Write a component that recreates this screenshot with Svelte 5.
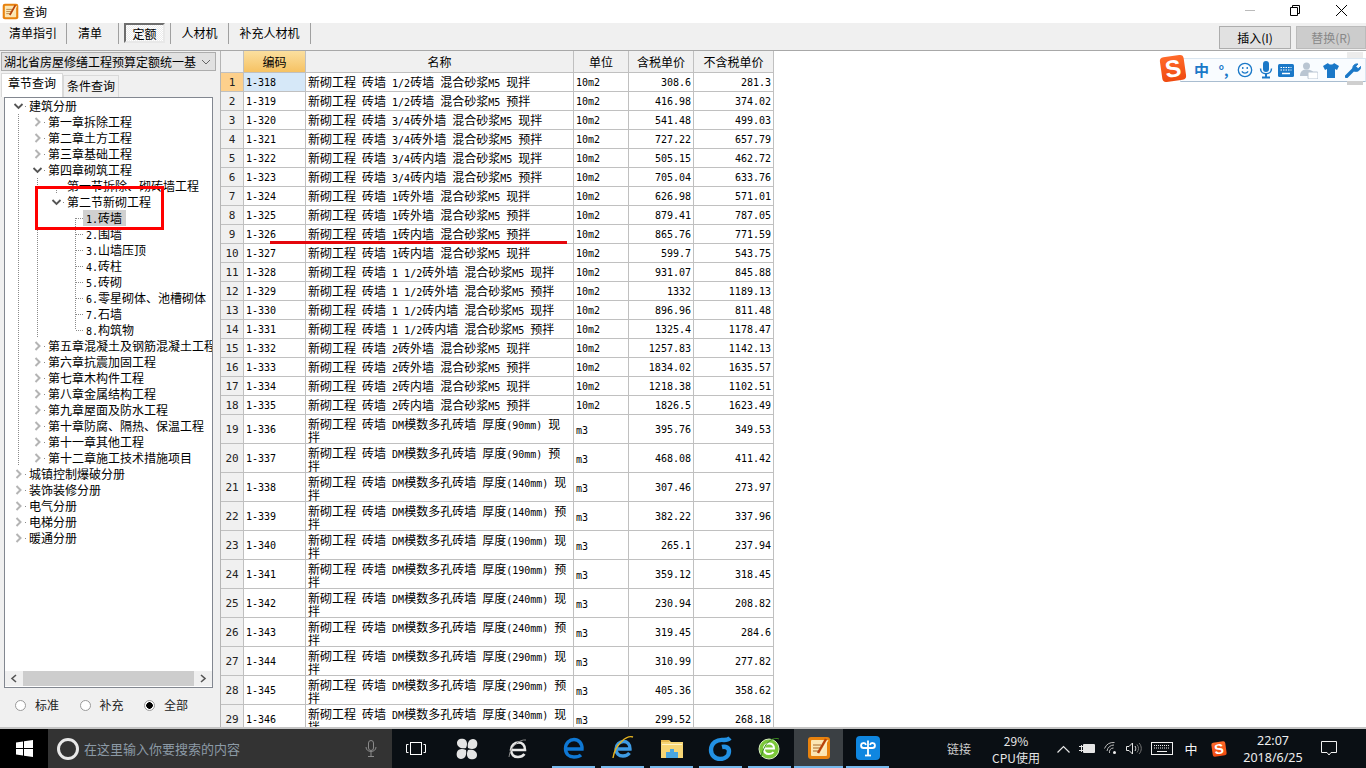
<script>
  // split mixed text so latin runs get half-width (6px) glyphs like the original bitmap font
  function parts(s) {
    return s.match(/[\x00-\x7f]+|[^\x00-\x7f]+/g).map((t) => ({ t, latin: /^[\x00-\x7f]/.test(t) }));
  }

  const prices = [
    ["1/2砖墙", "现", "308.6", "281.3"],
    ["1/2砖墙", "预", "416.98", "374.02"],
    ["3/4砖外墙", "现", "541.48", "499.03"],
    ["3/4砖外墙", "预", "727.22", "657.79"],
    ["3/4砖内墙", "现", "505.15", "462.72"],
    ["3/4砖内墙", "预", "705.04", "633.76"],
    ["1砖外墙", "现", "626.98", "571.01"],
    ["1砖外墙", "预", "879.41", "787.05"],
    ["1砖内墙", "预", "865.76", "771.59"],
    ["1砖内墙", "现", "599.7", "543.75"],
    ["1 1/2砖外墙", "现", "931.07", "845.88"],
    ["1 1/2砖外墙", "预", "1332", "1189.13"],
    ["1 1/2砖内墙", "现", "896.96", "811.48"],
    ["1 1/2砖内墙", "预", "1325.4", "1178.47"],
    ["2砖外墙", "现", "1257.83", "1142.13"],
    ["2砖外墙", "预", "1834.02", "1635.57"],
    ["2砖内墙", "现", "1218.38", "1102.51"],
    ["2砖内墙", "预", "1826.5", "1623.49"],
    [90, "现", "395.76", "349.53"],
    [90, "预", "468.08", "411.42"],
    [140, "现", "307.46", "273.97"],
    [140, "预", "382.22", "337.96"],
    [190, "现", "265.1", "237.94"],
    [190, "预", "359.12", "318.45"],
    [240, "现", "230.94", "208.82"],
    [240, "预", "319.45", "284.6"],
    [290, "现", "310.99", "277.82"],
    [290, "预", "405.36", "358.62"],
    [340, "现", "299.52", "268.18"],
  ];

  const rows = prices.map(([kind, mix, tax, net], i) => {
    const tall = typeof kind === "number";
    return {
      n: i + 1,
      code: "1-" + (318 + i),
      name: tall
        ? `新砌工程 砖墙 DM模数多孔砖墙 厚度(${kind}mm) ${mix}拌`
        : `新砌工程 砖墙 ${kind} 混合砂浆M5 ${mix}拌`,
      unit: tall ? "m3" : "10m2",
      tax,
      net,
      tall,
    };
  });

  // [label, state, guides]  | full  T lower half  L upper half
  const tree = [
    ["建筑分册", "open", "T"],
    ["第一章拆除工程", "closed", "|T"],
    ["第二章土方工程", "closed", "||"],
    ["第三章基础工程", "closed", "||"],
    ["第四章砌筑工程", "open", "||"],
    ["第一节拆除、砌砖墙工程", "", "||T"],
    ["第二节新砌工程", "open", "||L"],
    ["1.砖墙", "", "|| T", true],
    ["2.围墙", "", "|| |"],
    ["3.山墙压顶", "", "|| |"],
    ["4.砖柱", "", "|| |"],
    ["5.砖砌", "", "|| |"],
    ["6.零星砌体、池槽砌体", "", "|| |"],
    ["7.石墙", "", "|| |"],
    ["8.构筑物", "", "|| L"],
    ["第五章混凝土及钢筋混凝土工程", "closed", "||"],
    ["第六章抗震加固工程", "closed", "||"],
    ["第七章木构件工程", "closed", "||"],
    ["第八章金属结构工程", "closed", "||"],
    ["第九章屋面及防水工程", "closed", "||"],
    ["第十章防腐、隔热、保温工程", "closed", "||"],
    ["第十一章其他工程", "closed", "||"],
    ["第十二章施工技术措施项目", "closed", "|L"],
    ["城镇控制爆破分册", "closed", "|"],
    ["装饰装修分册", "closed", "|"],
    ["电气分册", "closed", "|"],
    ["电梯分册", "closed", "|"],
    ["暖通分册", "closed", "L"],
  ];
  const guideClass = { "|": "full", T: "lower", L: "upper", " ": "" };

  const tabs = [
    { t: "清单指引", w: 67 },
    { t: "清单", w: 52, shift: true },
    { t: "定额", w: 52, on: true },
    { t: "人材机", w: 58 },
    { t: "补充人材机", w: 82 },
  ];
</script>

{#snippet mixed(s)}
  {#each parts(s) as p}{#if p.latin}<span class="half">{p.t}</span>{:else}{p.t}{/if}{/each}
{/snippet}

{#snippet quoteIcon(size)}
  <svg width={size} height={size} viewBox="0 0 24 24">
    <rect x="1" y="1" width="22" height="22" rx="3" fill="#e8820e" />
    <rect x="4" y="4" width="16" height="16" rx="1" fill="#fbe6b4" />
    <path d="M6 9h8M6 12h7M6 15h7" stroke="#a86a28" stroke-width="1" />
    <path d="M19 3L11 17" stroke="#b8430c" stroke-width="2.5" />
    <path d="M21 4L14 17" stroke="#fff2c8" stroke-width="1" />
  </svg>
{/snippet}

{#snippet sogou(cls)}
  <div class="sogou {cls}"><span>S</span></div>
{/snippet}

<div class="screen">
  <header class="title">
    <span class="appicon">{@render quoteIcon(17)}</span>
    <span class="title-text">查询</span>
    <div class="winbtns">
      <svg width="46" height="23" viewBox="0 0 46 23"><path d="M17 10.5h10" stroke="#bbb" /></svg>
      <svg width="46" height="23" viewBox="0 0 46 23" fill="none" stroke="#000"><path d="M16.5 7.5h7v8h-7zM18.5 7.5v-2h7v8h-2" /></svg>
      <svg width="46" height="23" viewBox="0 0 46 23" stroke="#000"><path d="M16 5l11 11M27 5L16 16" /></svg>
    </div>
  </header>

  <div class="body">
    <div class="toolbar">
      {#each tabs as tab}
        <div class="tool" class:shift={tab.shift} style="width:{tab.w}px">
          <span class:pressed={tab.on}>{tab.t}</span>
        </div>
      {/each}
      <div class="actions">
        <button class="act">插入(I)</button>
        <button class="act off">替换(R)</button>
      </div>
    </div>

    <div class="content">
      <aside class="side">
        <div class="combo">
          <span>湖北省房屋修缮工程预算定额统一基</span>
          <svg width="10" height="6" viewBox="0 0 10 6" fill="none" stroke="#666"><path d="M1 1l4 4 4-4" /></svg>
        </div>
        <div class="sidetabs">
          <div class="stab on">章节查询</div>
          <div class="stab">条件查询</div>
        </div>
        <div class="treebox">
          <div class="tree">
            {#each tree as [label, state, guides, selected]}
              <div class="node">
                {#each guides.slice(0, -1) as g}
                  <i class="guide {guideClass[g]}"></i>
                {/each}
                <i class="guide tip {guideClass[guides[guides.length - 1]]}"></i>
                <i class="conn">
                  {#if state === "open"}
                    <svg class="exp" width="11" height="16" viewBox="0 0 11 16" fill="none" stroke="#555" stroke-width="1.8"><path d="M1.5 6l4 4 4-4" /></svg>
                  {:else if state === "closed"}
                    <svg class="exp" width="11" height="16" viewBox="0 0 11 16" fill="none" stroke="#b4b4b4" stroke-width="2"><path d="M3.5 4l4 4-4 4" /></svg>
                  {/if}
                </i>
                <span class="label" class:selected>{@render mixed(label)}</span>
              </div>
            {/each}
          </div>
          <div class="hscroll">
            <svg width="18" height="15" viewBox="0 0 18 15" fill="none" stroke="#555" stroke-width="1.6"><path d="M11 4L7 7.5l4 3.5" /></svg>
            <div class="thumb"></div>
            <svg width="18" height="15" viewBox="0 0 18 15" fill="none" stroke="#555" stroke-width="1.6"><path d="M7 4l4 3.5L7 11" /></svg>
          </div>
        </div>
        <div class="radios">
          <label class="radio"><i class="dot"></i>标准</label>
          <label class="radio"><i class="dot"></i>补充</label>
          <label class="radio"><i class="dot checked"></i>全部</label>
        </div>
      </aside>

      <main class="grid-wrap">
        <div class="grid">
          <div class="line head">
            <div class="c rowno"></div>
            <div class="c hot">编码</div>
            <div class="c">名称</div>
            <div class="c">单位</div>
            <div class="c">含税单价</div>
            <div class="c">不含税单价</div>
          </div>
          {#each rows as r}
            <div class="line" class:tall={r.tall}>
              <div class="c rowno" class:cur={r.n === 1}><span class="half wide">{r.n}</span></div>
              <div class="c left" class:curcell={r.n === 1}><span class="half">{r.code}</span></div>
              <div class="c left name"><div>{@render mixed(r.name)}</div></div>
              <div class="c left" class:low={r.tall}><span class="half">{r.unit}</span></div>
              <div class="c right"><span class="half">{r.tax}</span></div>
              <div class="c right"><span class="half">{r.net}</span></div>
            </div>
          {/each}
        </div>
      </main>
    </div>

    <div class="mark-box"></div>
    <div class="mark-line"></div>

    <div class="imebar">
      {@render sogou("ime-logo")}
      <span class="ime-zh">中</span>
      <span class="ime-punc">°,</span>
      <svg width="16" height="16" viewBox="0 0 18 18" fill="none" stroke="#1a78c8" stroke-width="1.5"><circle cx="9" cy="9" r="7.5" /><path d="M5.5 10.5c1.5 2.6 5.5 2.6 7 0" /><path d="M6.5 5.5v2.5M11.5 5.5v2.5" /></svg>
      <svg width="14" height="18" viewBox="0 0 14 18" fill="#1a78c8"><rect x="4" y="0" width="6" height="11" rx="3" /><path d="M1.5 7.5c0 7 11 7 11 0" fill="none" stroke="#1a78c8" stroke-width="1.5" /><rect x="6" y="13" width="2" height="3" /><rect x="3" y="15.5" width="8" height="2" /></svg>
      <svg width="16" height="13" viewBox="0 0 16 13"><rect width="16" height="13" rx="1.5" fill="#1a78c8" /><path d="M2.5 3.5h11M2.5 6h11" stroke="#fff" stroke-dasharray="1.5 1" /><path d="M4 9.5h8" stroke="#fff" stroke-width="1.5" /></svg>
      <svg width="18" height="17" viewBox="0 0 18 17" fill="#b9c5d2"><circle cx="6.5" cy="4" r="3.5" /><path d="M0 14c0-5 3-6.5 6.5-6.5S13 9 13 10v4z" /><rect x="8" y="10" width="10" height="7" rx="1" fill="#fff" stroke="#b9c5d2" /></svg>
      <svg width="16" height="15" viewBox="0 0 16 15" fill="#1a78c8"><path d="M5 0L0 3l2 4 2-1v9h8V6l2 1 2-4-5-3c-1 2-5 2-6 0z" /></svg>
      <svg width="16" height="16" viewBox="0 0 16 16" fill="none" stroke="#1a78c8"><path d="M1.5 14.5l7-7" stroke-width="3.4" stroke-linecap="round" /><path d="M8 7c-.8-3 1.6-5.6 5-5L10.8 4.300l1 1.700 2 .4L15.500 4.500c.6 3.200-3 6-6.500 4.500z" fill="#1a78c8" stroke-width="1" /></svg>
    </div>
    <i class="imeend top"></i>
    <i class="imeend bottom"></i>
  </div>

  <footer class="taskbar">
    <div class="start">
      <svg width="17" height="17" viewBox="0 0 17 17" fill="#fff"><path d="M0 2.400l7-1v6.600H0zM8 1.300L17 0v8H8zM0 9h7v6.600l-7-1zM8 9h9v8l-9-1.300z" /></svg>
    </div>
    <div class="search">
      <i class="cortana"></i>
      <span class="hint">在这里输入你要搜索的内容</span>
      <svg width="12" height="17" viewBox="0 0 12 17" fill="none" stroke="#8a8a8a"><rect x="3.500" y=".5" width="5" height="10" rx="2.500" /><path d="M1 7c0 6 10 6 10 0M6 12v4M3 16.500h6" /></svg>
    </div>

    <div class="apps first">
      <div class="app">
        <svg width="20" height="16" viewBox="0 0 20 16" fill="none" stroke="#fff"><rect x="4.500" y="1.500" width="11" height="12" /><path d="M2.500 3.500H.5v8h2M17.500 3.500h2v8h-2" /></svg>
      </div>
      <div class="app">
        <svg width="22" height="22" viewBox="0 0 22 22" fill="#e4e4e4"><path d="M10 10C5 11 1 9 1 5s4-5 7-4c3 1 4 5 2 9zM12 10C11 5 13 1 17 1s5 4 4 7c-1 3-5 4-9 2zM12 12c5-1 9 1 9 5s-4 5-7 4c-3-1-4-5-2-9zM10 12c1 5-1 9-5 9s-5-4-4-7c1-3 5-4 9-2z" /></svg>
      </div>
      <div class="app">
        <svg width="22" height="24" viewBox="0 0 22 24" fill="none" stroke="#e8e8e8" stroke-width="2.600"><path d="M4 13h14c.3-5-3-7.500-6.500-7.500S4 8.500 4 13s3 7 7 7c3 0 5-1 6.500-3" /><path d="M19 3C13 2 3 9 2 20" stroke="#888" stroke-width="1" /></svg>
      </div>
    </div>
    <div class="apps second">
      <div class="app run">
        <svg width="21" height="22" viewBox="0 0 21 22" fill="none" stroke="#0f78d4" stroke-width="3.400"><path d="M4 12h15c.3-6-3.500-9.500-8-9.500S2.500 6 2.500 11.500 6 20 11 20c3 0 5.500-.6 7-2" /></svg>
      </div>
      <div class="app run">
        <svg width="24" height="26" viewBox="0 0 24 26" fill="none"><path d="M5 14h14c.3-5-3-7.500-6.500-7.500S5 9.500 5 14s3 7 7 7c3 0 5-1 6.500-3" stroke="#3e9be3" stroke-width="3.400" /><path d="M22 2C16 0 4 9 2 23" stroke="#e7b521" stroke-width="1.400" /></svg>
      </div>
      <div class="app run">
        <svg width="22" height="20" viewBox="0 0 22 20"><path d="M0 2h8l2 2h12v16H0z" fill="#f7d675" /><rect x="0" y="2" width="8" height="2" fill="#e6b94f" /><rect x="1" y="6" width="20" height="1" fill="#fff2c4" /><path d="M5 20v-6h4v-3h4v3h4v6z" fill="#4aa6e0" /></svg>
      </div>
      <div class="app run">
        <svg width="25" height="26" viewBox="0 0 25 26" fill="none" stroke="#2291e4" stroke-width="4.400"><path d="M22 3c-2 2-3 2-6 2C9 4 3 8 3 15c0 5 4 9 9 9 5 0 9-3 9-8 0-3-3-5-7-4" /></svg>
      </div>
      <div class="app run">
        <svg width="23" height="24" viewBox="0 0 23 24"><circle cx="11" cy="13" r="10" fill="#7cc83a" stroke="#d8f0c0" /><path d="M6 12.500h10c.2-3.500-2-5-5-5s-5 2.500-5 5.500 2 5 5 5c2 0 3.500-.6 4.500-2" fill="none" stroke="#fff" stroke-width="2" /><path d="M21 3C16 1 7 4 3 21" fill="none" stroke="#3a8a1e" /></svg>
      </div>
      <div class="app active">{@render quoteIcon(24)}</div>
      <div class="app run">
        <svg width="24" height="24" viewBox="0 0 24 24"><rect width="24" height="24" rx="4" fill="#0f86e0" /><path d="M12 4.500v15M12 12H7.500a2.500 2.500 0 1 1 2.500-3M12 12h4.500a2.500 2.500 0 1 0-2.500-3" fill="none" stroke="#fff" stroke-width="1.800" /><path d="M9 19.500h6" stroke="#fff" stroke-width="1.800" /></svg>
      </div>
    </div>

    <div class="tray">
      <span class="link">链接</span>
      <div class="cpu"><span>29%</span><span>CPU使用</span></div>
      <div class="ti"><svg width="13" height="8" viewBox="0 0 13 8" fill="none" stroke="#e6e6e6" stroke-width="1.200"><path d="M.5 7.500l6-6 6 6" /></svg></div>
      <div class="ti"><svg width="16" height="11" viewBox="0 0 16 11" fill="#e6e6e6"><rect x="4" y="1" width="12" height="9" rx="1" /><path d="M0 3h4v1H0zM0 7h4v1H0z" /><path d="M2 2h1v7H2z" /></svg></div>
      <div class="ti"><svg width="13" height="13" viewBox="0 0 13 13" fill="none" stroke="#bbb" stroke-width="1"><path d="M.5 6.500a10 10 0 0 1 10-6M3 9a7 7 0 0 1 7-6M5.500 11a4 4 0 0 1 4-5" /><circle cx="10.500" cy="10.500" r="1.500" fill="#eee" stroke="none" /></svg></div>
      <div class="ti"><svg width="16" height="13" viewBox="0 0 16 13" fill="none" stroke="#e6e6e6"><path d="M.5 4.500h2.500l3.500-3.500v11L3 8.500H.5z" /><path d="M9 4c1 1.500 1 3.500 0 5" /><path d="M11 2.500c2 2.500 2 5.500 0 8M13 1c3 3 3 8 0 11" stroke="#777" /></svg></div>
      <div class="ti"><svg width="22" height="13" viewBox="0 0 22 13" fill="none" stroke="#f0f0f0"><rect x=".5" y=".5" width="21" height="12" /><path d="M3 3.500h16M3 6h16" stroke-dasharray="1 1" /><path d="M6 9.500h10" /></svg></div>
      <div class="ti zh">中</div>
      <div class="ti">{@render sogou("tray-logo")}</div>
      <div class="clock"><span>22:07</span><span>2018/6/25</span></div>
      <div class="ti"><svg width="16" height="15" viewBox="0 0 16 15" fill="none" stroke="#f0f0f0"><path d="M.5.500h15v11H10L8 14l-2-2.500H.5z" /></svg></div>
      <div></div>
    </div>
  </footer>
</div>

<style>
  :global(body) {
    margin: 0;
    background: #f0f0f0;
  }

  .screen {
    width: 1366px;
    height: 768px;
    display: flex;
    flex-direction: column;
    overflow: hidden;
    font: 12px/16px "Noto Sans CJK SC", sans-serif;
    color: #000;
  }

  .half {
    font-family: "DejaVu Sans Mono", "Liberation Mono", monospace;
    font-size: 10px;
    white-space: pre;
  }

  .half.wide {
    font-size: 11px;
    color: #222;
  }

  .title {
    height: 23px;
    flex: none;
    background: #fff;
    display: flex;
    align-items: center;
  }

  .appicon {
    display: flex;
    margin-left: 2px;
  }

  .title-text {
    margin-left: 4px;
  }

  .winbtns {
    margin-left: auto;
    display: flex;
  }

  .winbtns svg {
    display: block;
  }

  .body {
    flex: 1;
    position: relative;
    display: flex;
    flex-direction: column;
    min-height: 0;
    background: #f0f0f0;
  }

  .toolbar {
    height: 27px;
    flex: none;
    display: flex;
    align-items: flex-start;
    border-bottom: 1px solid #a8a8a8;
    box-sizing: content-box;
  }

  .tool {
    height: 21px;
    flex: none;
    display: flex;
    align-items: center;
    justify-content: center;
    border-right: 1px solid #a0a0a0;
    box-sizing: border-box;
    font-size: 12px;
    padding-bottom: 2px;
  }

  .tool.shift {
    padding-right: 5px;
  }

  .tool .pressed {
    width: 41px;
    height: 20px;
    box-sizing: border-box;
    display: flex;
    align-items: center;
    justify-content: center;
    padding-top: 3px;
    border: 2px solid;
    border-color: #6e6e6e #e8e8e8 #e8e8e8 #6e6e6e;
    background: repeating-conic-gradient(#fff 0 25%, #ececec 0 50%) 0 0 / 2px 2px;
  }

  .actions {
    margin-left: auto;
    display: flex;
    gap: 5px;
    padding-top: 3px;
  }

  .act {
    width: 72px;
    height: 23px;
    padding: 0;
    background: #e1e1e1;
    border: 1px solid #adadad;
    font: inherit;
    color: #000;
  }

  .act.off {
    width: 70px;
    background: #ccc;
    border-color: #bbb;
    color: #888;
  }

  .content {
    flex: 1;
    min-height: 0;
    display: flex;
  }

  .side {
    width: 220px;
    flex: none;
    display: flex;
    flex-direction: column;
    padding-top: 1px;
  }

  .combo {
    width: 215px;
    height: 19px;
    margin-left: 1px;
    box-sizing: border-box;
    background: #e1e1e1;
    border: 1px solid #adadad;
    display: flex;
    align-items: center;
    justify-content: space-between;
    padding: 0 4px 0 2px;
    overflow: hidden;
    white-space: nowrap;
  }

  .sidetabs {
    display: flex;
    align-items: flex-end;
    height: 23px;
    margin: 3px 0 0 1px;
  }

  .stab {
    width: 56px;
    height: 22px;
    box-sizing: border-box;
    text-align: center;
    line-height: 19px;
    border: 1px solid #d9d9d9;
    border-bottom: 0;
  }

  .stab.on {
    width: 62px;
    height: 24px;
    background: #fff;
    line-height: 18px;
  }

  .treebox {
    width: 209px;
    height: 591px;
    margin-left: 4px;
    box-sizing: border-box;
    border: 1px solid #828790;
    background: #fff;
    display: flex;
    flex-direction: column;
    overflow: hidden;
  }

  .tree {
    flex: 1;
    min-height: 0;
    padding: 0 0 0 13px;
    overflow: hidden;
  }

  .node {
    height: 16px;
    display: flex;
    white-space: nowrap;
  }

  .guide {
    flex: none;
    width: 19px;
    height: 16px;
  }

  .guide.tip {
    width: 1px;
  }

  .guide.full {
    background: repeating-linear-gradient(#8a8a8a 0 1px, transparent 1px 2px) no-repeat 0 0 / 1px 16px;
  }

  .guide.upper {
    background: repeating-linear-gradient(#8a8a8a 0 1px, transparent 1px 2px) no-repeat 0 0 / 1px 8px;
  }

  .guide.lower {
    background: repeating-linear-gradient(#8a8a8a 0 1px, transparent 1px 2px) no-repeat 0 8px / 1px 8px;
  }

  .conn {
    flex: none;
    width: 7px;
    height: 16px;
    background: repeating-linear-gradient(90deg, #8a8a8a 0 1px, transparent 1px 2px) no-repeat 0 8px / 7px 1px;
  }

  .exp {
    display: block;
    margin-left: -6px;
    background: #fff;
  }

  .label {
    padding: 0 4px 0 3px;
  }

  .label.selected {
    background: #d0d0d0;
  }

  .hscroll {
    flex: none;
    height: 15px;
    margin: 0 0 1px;
    display: flex;
    background: #f0f0f0;
  }

  .hscroll svg {
    flex: none;
  }

  .thumb {
    flex: 1;
    background: #cdcdcd;
  }

  .radios {
    display: flex;
    height: 34px;
    padding-left: 15px;
    align-items: center;
    margin-top: 0;
  }

  .radio {
    display: flex;
    align-items: center;
    width: 64.500px;
    color: #222;
  }

  .dot {
    width: 9px;
    height: 9px;
    margin-right: 9px;
    border: 1px solid #9a9a9a;
    border-radius: 50%;
    background: #fff;
    box-sizing: content-box;
  }

  .dot.checked {
    background: radial-gradient(circle, #000 0 3px, #fff 3.500px);
  }

  .grid-wrap {
    flex: 1;
    min-width: 0;
    background: #fff;
    overflow: hidden;
    border-left: 1px solid #b4b4b4;
  }

  .grid {
    width: 553px;
  }

  .line {
    display: grid;
    grid-template-columns: 23px 62px 268px 55px 65px 80px;
    grid-template-rows: minmax(0, 1fr);
    height: 19px;
  }

  .line.tall {
    height: 29px;
  }

  .line.head {
    height: 22px;
    text-align: center;
  }

  .c {
    box-sizing: border-box;
    min-height: 0;
    border-right: 1px solid #c0c0c0;
    border-bottom: 1px solid #c0c0c0;
    display: flex;
    align-items: center;
    justify-content: center;
    white-space: nowrap;
    line-height: 13px;
  }

  .head .c {
    background: #f0f0f0;
  }

  .head .c.hot {
    background: linear-gradient(#fbdf9f, #f6c263);
  }

  .rowno {
    background: #f0f0f0;
  }

  .rowno.cur {
    background: #fdd08c;
  }

  .left {
    justify-content: flex-start;
    padding-left: 2px;
  }

  .left.low {
    padding-top: 3px;
  }

  .right {
    justify-content: flex-end;
    padding-right: 2px;
  }

  .name {
    padding-right: 5px;
    white-space: normal;
  }

  .tall .name div {
    padding-top: 2px;
  }

  .tall .name .half {
    line-height: 0;
  }

  .curcell {
    background: #d6e8f8;
  }

  .mark-box {
    position: absolute;
    left: 35px;
    top: 163px;
    width: 129px;
    height: 44px;
    box-sizing: border-box;
    border: 3px solid #f00;
  }

  .mark-line {
    position: absolute;
    left: 270px;
    top: 218px;
    width: 297px;
    height: 3px;
    background: #e4060c;
  }

  .imebar {
    position: absolute;
    right: 0;
    top: 35px;
    width: 186px;
    height: 24px;
    box-sizing: border-box;
    padding-left: 13px;
    background: #f9fcff;
    border: 1px solid #dbe6f0;
    border-bottom-color: #a9bdd0;
    display: flex;
    align-items: center;
    gap: 5.5px;
  }

  .ime-zh {
    width: 16px;
    color: #1a78c8;
    font-size: 15px;
    font-weight: 700;
  }

  .ime-punc {
    width: 16px;
    color: #1a78c8;
    font-size: 14px;
    font-weight: 700;
    text-align: center;
  }

  .imeend {
    position: absolute;
    right: 3px;
    width: 16px;
  }

  .imeend.top {
    top: 29px;
    height: 6px;
    background: #ececec;
  }

  .imeend.bottom {
    top: 58px;
    height: 4px;
    background: #cfcfcf;
  }

  .sogou {
    display: flex;
    align-items: center;
    justify-content: center;
    background: linear-gradient(#ff6a2a, #ef4a10);
    color: #fff;
    font-family: "Liberation Sans", sans-serif;
    font-weight: 700;
    transform: rotate(-8deg);
  }

  .ime-logo {
    position: absolute;
    left: -20px;
    top: -3px;
    width: 24px;
    height: 25px;
    font-size: 24px;
    border-radius: 4px;
  }

  .tray-logo {
    width: 14px;
    height: 14px;
    font-size: 14px;
    border-radius: 2px;
  }

  .taskbar {
    height: 41px;
    flex: none;
    box-sizing: border-box;
    border-top: 2px solid #c4c4c4;
    background: #0a0f14;
    display: flex;
    color: #e6e6e6;
  }

  .start {
    width: 48px;
    flex: none;
    background: #000;
    display: flex;
    align-items: center;
    justify-content: center;
  }

  .search {
    width: 344px;
    flex: none;
    box-sizing: border-box;
    background: #333;
    display: flex;
    align-items: center;
    padding: 0 15px 0 9px;
    color: #8c9aa6;
    font-size: 13px;
  }

  .cortana {
    width: 16px;
    height: 16px;
    margin-right: 5px;
    border: 3px solid #e8e8e8;
    border-radius: 50%;
  }

  .hint {
    flex: 1;
  }

  .apps {
    display: flex;
    flex: none;
  }

  .apps.first {
    gap: 3px;
  }

  .apps.second {
    margin-left: 7px;
  }

  .app {
    flex: none;
    width: 48px;
    display: flex;
    align-items: center;
    justify-content: center;
    box-sizing: border-box;
  }

  .second .app {
    width: 49px;
  }

  .app.run {
    border-bottom: 2px solid;
    border-image: linear-gradient(90deg, transparent 4px, #76b9ed 4px, #76b9ed 45px, transparent 45px) 1;
  }

  .app.active {
    background: #3b4044;
    border-bottom: 2px solid #76b9ed;
  }

  .tray {
    margin-left: auto;
    display: grid;
    grid-template-columns: 34px 70px 24px 24px 23px 24px 32px 26px 30px 78px 34px 20px;
    align-items: center;
    text-align: center;
  }

  .link {
    text-align: left;
    color: #ccc;
  }

  .cpu,
  .clock {
    display: flex;
    flex-direction: column;
    line-height: 17px;
  }

  .ti {
    display: flex;
    align-items: center;
    justify-content: center;
  }

  .ti.zh {
    font-size: 13px;
    color: #f4f4f4;
  }

  .clock {
    font-family: "Noto Sans", sans-serif;
    font-size: 12.500px;
    color: #eee;
  }
</style>
